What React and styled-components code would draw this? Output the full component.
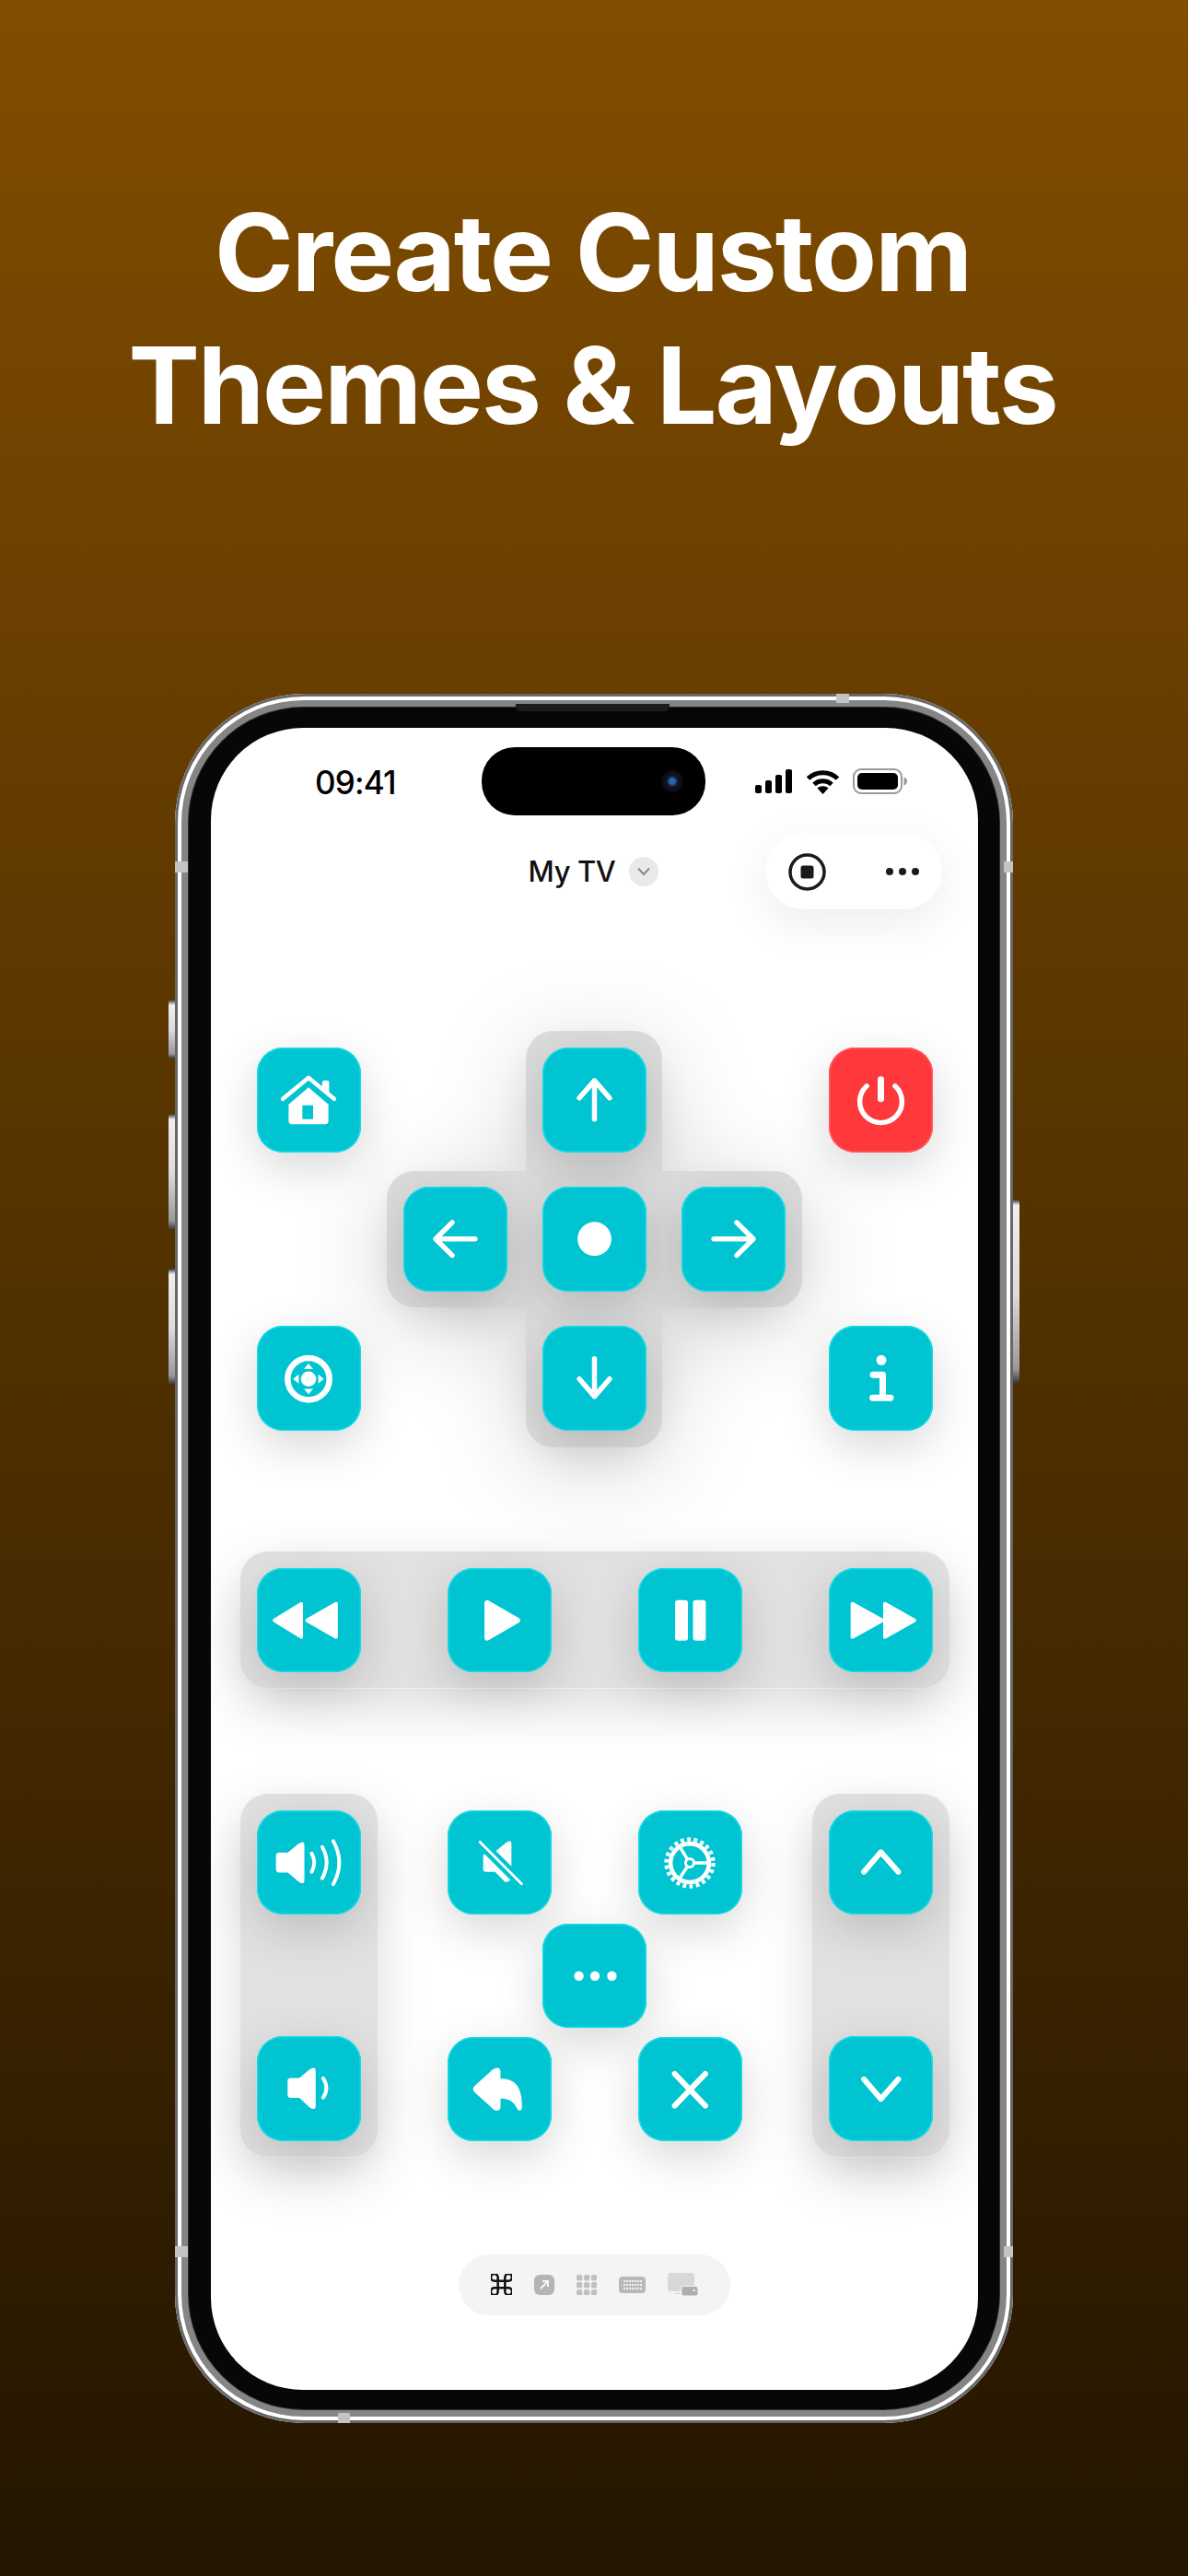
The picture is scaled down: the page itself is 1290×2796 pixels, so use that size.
import React from 'react';
import styled, { createGlobalStyle } from 'styled-components';

const GlobalStyle = createGlobalStyle`
html, body {
  margin: 0;
  padding: 0;
  background: #231500;
}
* { box-sizing: border-box; }
`;

const Page = styled.div`
width: 1290px;
height: 2796px;
overflow: hidden;
display: flex;
flex-direction: column;
align-items: center;
background: linear-gradient(180deg, #814d00 0%, #231500 100%);
font-family: Inter, "Liberation Sans", sans-serif;
`;

const Title = styled.h1`
margin: 202px 0 0;
padding-right: 3px;
font-size: 116px;
line-height: 144px;
font-weight: 700;
letter-spacing: -2px;
text-align: center;
color: #fff;
`;

const Phone = styled.div`
position: relative;
flex: none;
width: 910px;
height: 1877px;
margin-top: 263px;
padding: 37px 38px 36px 39px;
border-radius: 140px;
background: #070707;
box-shadow: inset 0 0 0 3px #686868, inset 0 0 0 7px #fff, inset 0 0 0 14px #858585, inset 0 0 0 15px #2a2a2a;
`;

const SideButton = styled.span`
position: absolute;
top: ${p => p.$top}px;
height: ${p => p.$height}px;
${p => (p.$right ? 'right: -7px;' : 'left: -7px;')}
width: 7px;
border-radius: ${p => (p.$right ? '0 3px 3px 0' : '3px 0 0 3px')};
background: linear-gradient(180deg, #333 0, #eee 6px, #ddd 50%, #999 92%, #333 100%);
`;

const Band = styled.span`
position: absolute;
background: #c4c4c4;
${p => p.$css}
`;

const Speaker = styled.span`
position: absolute;
top: 11px;
left: 370px;
width: 167px;
height: 8px;
border-radius: 0 0 5px 5px;
background: #1c1c1c;
`;

const Screen = styled.div`
width: 833px;
height: 1804px;
border-radius: 100px;
overflow: hidden;
background: #fff;
display: flex;
flex-direction: column;
`;

const StatusBar = styled.div`
display: grid;
grid-template-columns: 294px 243px 1fr;
height: 72px;
margin-top: 21px;
`;

const Time = styled.div`
padding: 2px 0 0 113px;
font-size: 35px;
font-weight: 500;
letter-spacing: -0.8px;
line-height: 72px;
color: #000;
`;

const Island = styled.div`
display: flex;
align-items: center;
justify-content: flex-end;
padding-right: 24px;
border-radius: 36px;
background: #000;
`;

const Camera = styled.span`
width: 24px;
height: 24px;
border-radius: 50%;
background: radial-gradient(circle, #2a63b0 0 3px, #14294f 5px, #101218 7px, #0b0b0d 12px);
`;

const StatusIcons = styled.div`
display: flex;
align-items: center;
justify-content: flex-end;
gap: 14px;
padding-right: 77px;
`;

const Nav = styled.div`
display: grid;
grid-template-columns: 1fr auto 1fr;
align-items: center;
height: 83px;
margin-top: 21px;
`;

const NavTitle = styled.div`
grid-column: 2;
display: flex;
align-items: center;
gap: 15px;
padding-right: 2px;
font-size: 31px;
font-weight: 500;
letter-spacing: -0.4px;
color: #111;
`;

const ChevronBadge = styled.span`
display: flex;
align-items: center;
justify-content: center;
width: 32px;
height: 32px;
border-radius: 50%;
background: #e9e9e9;
`;

const Capsule = styled.div`
justify-self: end;
display: flex;
align-items: center;
justify-content: space-between;
width: 192px;
height: 83px;
margin-right: 39px;
padding: 1px 24px 0 25px;
border-radius: 42px;
background: #fff;
box-shadow: 0 14px 50px rgba(0, 0, 0, 0.08);
`;

const Remote = styled.div`
display: flex;
flex-direction: column;
width: 770px;
margin: 132px 0 0 31.5px;
`;

const Keypad = styled.div`
display: flex;
justify-content: space-between;
padding: 0 18px;
`;

const CornerColumn = styled.div`
display: flex;
flex-direction: column;
justify-content: space-between;
padding: 18px 0;
`;

const Cross = styled.div`
position: relative;
display: grid;
grid-template-columns: repeat(3, 113px);
grid-template-rows: repeat(3, 113.5px);
gap: 37.5px 38px;
padding: 18px;
`;

const CrossPlate = styled.div`
position: absolute;
inset: 0;
filter: drop-shadow(0 20px 50px rgba(0, 0, 0, 0.16));

&::before, &::after {
  content: '';
  position: absolute;
  border-radius: 30px;
  background: #dbdbdb;
}
&::before { top: 0; bottom: 0; left: 151px; width: 148px; }
&::after { left: 0; right: 0; top: 152px; height: 148px; }
`;

const Plate = styled.div`
display: flex;
justify-content: space-between;
border-radius: 30px;
background: #e1e1e1;
box-shadow: 0 20px 60px rgba(0, 0, 0, 0.14), inset 0 -1px 0 rgba(255, 255, 255, 0.5);
`;

const TransportPlate = styled(Plate)`
height: 149px;
margin-top: 113px;
padding: 18px 18px 17px;
`;

const Lower = styled.div`
display: flex;
justify-content: space-between;
height: 395px;
margin-top: 114px;
`;

const RockerPlate = styled(Plate)`
flex-direction: column;
width: 149px;
padding: 18px;
`;

const Middle = styled.div`
display: flex;
flex-direction: column;
align-items: center;
gap: 9.5px;
width: 320px;
padding-top: 18px;
`;

const MiddleRow = styled.div`
display: flex;
justify-content: space-between;
width: 100%;
`;

const Key = styled.div`
position: relative;
z-index: 1;
flex: none;
display: flex;
width: 113px;
height: 113.5px;
border-radius: 28px;
grid-column: ${p => p.$col || 'auto'};
grid-row: ${p => p.$row || 'auto'};
background: ${p => (p.$red ? '#ff383c' : '#00c4d2')};
box-shadow: inset 0 0 0 1.5px ${p => (p.$red ? '#ff5a60' : '#12dde6')}, 0 16px 50px rgba(0, 0, 0, 0.16);
`;

const Glyph = styled.svg.attrs({ viewBox: '0 0 113 114' })`
width: 113px;
height: 113.5px;
fill: #fff;
stroke: none;
`;

const Dock = styled.div`
align-self: center;
display: flex;
align-items: center;
justify-content: center;
gap: 24px;
width: 295px;
height: 66px;
margin-top: 105px;
border-radius: 33px;
background: #f4f4f4;
`;

const line = { fill: 'none', stroke: '#fff', strokeWidth: 5.5, strokeLinecap: 'round', strokeLinejoin: 'round' };
const solid = { stroke: '#fff', strokeWidth: 4, strokeLinejoin: 'round' };

const HomeIcon = () => (
  <Glyph>
    <path {...line} strokeWidth={4.5} d="M28 56 L56 33 L84 56" />
    <path d="M71 38 Q71 36 73 36 H76.5 Q78.5 36 78.5 38 V50 L71 44Z" />
    <path fillRule="evenodd" d="M56 43.5 L77.7 62 V80 Q77.7 83.5 74 83.5 H38 Q34.3 83.5 34.3 80 V62Z M49.3 63 V78 H61 V63Z" />
  </Glyph>
);

const PowerIcon = () => (
  <Glyph>
    <path {...line} d="M41 42 A23 23 0 1 0 72 42" />
    <path {...line} strokeWidth={7} d="M56.5 35V56" />
  </Glyph>
);

const ArrowUp = () => <Glyph><path {...line} d="M56.5 37V78 M40 55 L56.5 36 L73 55" /></Glyph>;
const ArrowDown = () => <Glyph><path {...line} d="M56.5 77V36 M40 58 L56.5 77 L73 58" /></Glyph>;
const ArrowLeft = () => <Glyph><path {...line} d="M35 57H78 M53 39 L35 57 L53 75" /></Glyph>;
const ArrowRight = () => <Glyph><path {...line} d="M78 57H35 M60 39 L78 57 L60 75" /></Glyph>;
const OkIcon = () => <Glyph><circle cx="56.5" cy="57" r="18.5" /></Glyph>;

const JoystickIcon = () => (
  <Glyph>
    <circle {...line} strokeWidth={6.5} cx="56" cy="58" r="22.8" />
    <circle cx="56" cy="58" r="8.3" />
    <path d="M56 41.3 L61 47.3 H51Z M56 74.7 L61 68.7 H51Z M39.3 58 L45.3 53 V63Z M72.7 58 L66.7 53 V63Z" />
  </Glyph>
);

const InfoIcon = () => (
  <Glyph>
    <circle cx="57" cy="37.5" r="5.5" />
    <path {...line} strokeWidth={7} d="M48 53.5 H58.5 V78 M47.5 78.5 H67" />
  </Glyph>
);

const RewindIcon = () => (
  <Glyph>
    <path {...solid} d="M19 57 L48 39 V75Z M54.5 57 L86 39 V75Z" />
  </Glyph>
);

const PlayIcon = () => (
  <Glyph>
    <path stroke="#fff" strokeWidth={6} strokeLinejoin="round" d="M43 38 V76 L76 57Z" />
  </Glyph>
);

const PauseIcon = () => (
  <Glyph>
    <rect x="40" y="35" width="14" height="44" rx="3" />
    <rect x="59.5" y="35" width="14" height="44" rx="3" />
  </Glyph>
);

const ForwardIcon = () => (
  <Glyph>
    <path {...solid} d="M25.5 39 L58 57 L25.5 75Z M61 39 L93 57 L61 75Z" />
  </Glyph>
);

const VolumeUpIcon = () => (
  <Glyph>
    <path d="M24 46 H33.5 L45 36.5 Q51.5 32 51.5 38 V76 Q51.5 82 45 77.5 L33.5 67.7 H24 Q20.5 67.7 20.5 64 V50 Q20.5 46 24 46Z" />
    <path {...line} strokeWidth={4} d="M59.5 47 Q65 57 59.5 67 M71 40 Q80.5 57 71 74 M83 33.5 Q96 57 83 80.5" />
  </Glyph>
);

const VolumeDownIcon = () => (
  <Glyph>
    <path d="M36.5 45.7 H46 L57 36.5 Q63.8 32 63.8 38 V76 Q63.8 82 57 77.5 L46 67.3 H36.5 Q33.2 67.3 33.2 64 V49 Q33.2 45.7 36.5 45.7Z" />
    <path {...line} strokeWidth={4} d="M72 46 Q79 57 72 67" />
  </Glyph>
);

const MuteIcon = () => (
  <Glyph>
    <path {...line} strokeWidth={2.8} d="M35 34.5 L80.5 80" />
    <path d="M52.5 44.3 L64 35 Q69.4 31.5 69.4 36 V61Z" />
    <path d="M40 47.5 L68.5 76 L63 78.5 L51.5 67 H41 Q38.6 67 38.6 64.5 V49Z" />
  </Glyph>
);

const spokes = 'M56 57.3 H75 M56 57.3 L45.3 40 M56 57.3 L45.3 73.5';

const GearIcon = () => (
  <Glyph>
    <circle cx="56" cy="57.3" r="25.6" fill="none" stroke="#fff" strokeWidth={4.4} strokeDasharray="3.9 3.41" />
    <circle cx="56" cy="57.3" r="21" fill="none" stroke="#fff" strokeWidth={4.6} />
    <path {...line} strokeWidth={3.5} d={spokes} />
    <circle cx="56" cy="57.3" r="4.6" fill="#00c4d2" stroke="#fff" strokeWidth={3} />
  </Glyph>
);

const ChevronUp = () => <Glyph><path {...line} strokeWidth={6} d="M38 67 L56.5 45.5 L75.5 67" /></Glyph>;
const ChevronDown = () => <Glyph><path {...line} strokeWidth={6} d="M38 47 L56.5 68.5 L75.5 47" /></Glyph>;

const DotsIcon = () => (
  <Glyph>
    <circle cx="39.5" cy="57" r="5.2" />
    <circle cx="57" cy="57" r="5.2" />
    <circle cx="75.5" cy="57" r="5.2" />
  </Glyph>
);

const CloseIcon = () => <Glyph><path {...line} strokeWidth={6} d="M39.5 40 L73 75 M73 40 L39.5 75" /></Glyph>;

const BackIcon = () => (
  <Glyph>
    <path d="M29 53.5 L49 35.5 Q57 31 57.5 38 V45.5 C74 45 81 55 81 76 C81 81 77 81 75.5 78 C72 70 66 67 57.5 67 V76 C57.5 81 52 81 49.5 78.5 L29 60 Q26 57 29 53.5Z" />
  </Glyph>
);

const SignalIcon = () => (
  <svg width="41" height="26" viewBox="0 0 41 26" fill="#000">
    <rect x="0" y="17" width="7" height="9" rx="2" />
    <rect x="11" y="12" width="7" height="14" rx="2" />
    <rect x="22" y="6" width="7" height="20" rx="2" />
    <rect x="33" y="0" width="7" height="26" rx="2" />
  </svg>
);

const WifiIcon = () => (
  <svg width="37" height="27" viewBox="0 0 37 27" fill="none" stroke="#000" strokeWidth="5">
    <path d="M2.5 10 C11 1.5 26 1.5 34.5 10" />
    <path d="M9 16.5 C14 11.5 23 11.5 28 16.5" />
    <path d="M18.5 27 L12.5 20.5 C15.5 17.5 21.5 17.5 24.5 20.5Z" fill="#000" stroke="none" />
  </svg>
);

const BatteryIcon = () => (
  <svg width="59" height="28" viewBox="0 0 59 28">
    <rect x="1" y="1" width="52" height="26" rx="8" fill="#fff" stroke="#9a9a9a" strokeWidth="2" />
    <rect x="5" y="5" width="44" height="18" rx="5" fill="#000" />
    <path d="M55.5 9.5 C58 10.5 59 12 59 14 C59 16 58 17.5 55.5 18.5Z" fill="#9a9a9a" />
  </svg>
);

const StopIcon = () => (
  <svg width="41" height="41" viewBox="0 0 41 41">
    <circle cx="20.5" cy="20.5" r="18.5" fill="none" stroke="#1b1b1b" strokeWidth="3.5" />
    <rect x="13.5" y="13.5" width="14" height="14" rx="2.5" fill="#1b1b1b" />
  </svg>
);

const MoreIcon = () => (
  <svg width="38" height="10" viewBox="0 0 38 10" fill="#1b1b1b">
    <circle cx="5" cy="5" r="4" />
    <circle cx="19" cy="5" r="4" />
    <circle cx="33" cy="5" r="4" />
  </svg>
);

const CommandIcon = () => (
  <svg width="23" height="23" viewBox="3 3 18 18" fill="none" stroke="#111" strokeWidth="2">
    <path d="M15 6v12a3 3 0 1 0 3-3H6a3 3 0 1 0 3 3V6a3 3 0 1 0-3 3h12a3 3 0 1 0-3-3" />
  </svg>
);

const ShortcutIcon = () => (
  <svg width="22" height="22" viewBox="0 0 22 22">
    <rect width="22" height="22" rx="6" fill="#b4b4b4" />
    <path d="M7 15 L15 7 M9 7 H15 V13" fill="none" stroke="#f4f4f4" strokeWidth="2" />
  </svg>
);

const gridCells = [0, 8, 16].flatMap(y => [0, 8, 16].map(x => [x, y]));

const GridIcon = () => (
  <svg width="22" height="22" viewBox="0 0 22 22" fill="#c0c0c0">
    {gridCells.map(([x, y]) => <rect key={`${x}-${y}`} x={x} y={y} width="6.4" height="6.4" rx="2" />)}
  </svg>
);

const keyCells = [5, 9, 13].flatMap(y => [5, 8, 11, 14, 17, 20, 23].map(x => [x, y]));

const KeyboardIcon = () => (
  <svg width="29" height="18" viewBox="0 0 29 18">
    <rect width="29" height="18" rx="4" fill="#b9b9b9" />
    {keyCells.map(([x, y]) => <rect key={`${x}-${y}`} x={x} y={y - 1} width="2" height="2" fill="#f0f0f0" />)}
  </svg>
);

const DevicesIcon = () => (
  <svg width="33" height="25" viewBox="0 0 33 25">
    <rect width="29" height="20" rx="3" fill="#d8d8d8" />
    <rect x="8" y="21.5" width="6" height="1.5" fill="#d8d8d8" />
    <rect x="15" y="14.5" width="18" height="10.5" rx="2.5" fill="#aeaeae" stroke="#f4f4f4" strokeWidth="1" />
    <circle cx="28.5" cy="19" r="1.2" fill="#f4f4f4" />
  </svg>
);

const bands = [
  'top: 0; left: 718px; width: 14px; height: 10px;',
  'bottom: 0; left: 177px; width: 13px; height: 11px;',
  'top: 182px; left: 0; width: 14px; height: 12px;',
  'top: 182px; right: 0; width: 10px; height: 12px;',
  'top: 1685px; left: 0; width: 14px; height: 12px;',
  'top: 1685px; right: 0; width: 10px; height: 12px;',
];

function App() {
  return (
    <Page>
      <GlobalStyle />
      <Title>Create Custom<br />Themes &amp; Layouts</Title>
      <Phone>
        <SideButton $top={332} $height={64} />
        <SideButton $top={456} $height={126} />
        <SideButton $top={624} $height={126} />
        <SideButton $right $top={549} $height={200} />
        {bands.map(b => <Band key={b} $css={b} />)}
        <Speaker />
        <Screen>
          <StatusBar>
            <Time>09:41</Time>
            <Island><Camera /></Island>
            <StatusIcons>
              <SignalIcon />
              <WifiIcon />
              <BatteryIcon />
            </StatusIcons>
          </StatusBar>
          <Nav>
            <NavTitle>
              My TV
              <ChevronBadge>
                <svg width="16" height="10" viewBox="0 0 16 10" fill="none" stroke="#8a8a8a" strokeWidth="2">
                  <path d="M2 1.5 L8 8 L14 1.5" />
                </svg>
              </ChevronBadge>
            </NavTitle>
            <Capsule>
              <StopIcon />
              <MoreIcon />
            </Capsule>
          </Nav>
          <Remote>
            <Keypad>
              <CornerColumn>
                <Key><HomeIcon /></Key>
                <Key><JoystickIcon /></Key>
              </CornerColumn>
              <Cross>
                <CrossPlate />
                <Key $col={2} $row={1}><ArrowUp /></Key>
                <Key $col={1} $row={2}><ArrowLeft /></Key>
                <Key $col={2} $row={2}><OkIcon /></Key>
                <Key $col={3} $row={2}><ArrowRight /></Key>
                <Key $col={2} $row={3}><ArrowDown /></Key>
              </Cross>
              <CornerColumn>
                <Key $red><PowerIcon /></Key>
                <Key><InfoIcon /></Key>
              </CornerColumn>
            </Keypad>
            <TransportPlate>
              <Key><RewindIcon /></Key>
              <Key><PlayIcon /></Key>
              <Key><PauseIcon /></Key>
              <Key><ForwardIcon /></Key>
            </TransportPlate>
            <Lower>
              <RockerPlate>
                <Key><VolumeUpIcon /></Key>
                <Key><VolumeDownIcon /></Key>
              </RockerPlate>
              <Middle>
                <MiddleRow>
                  <Key><MuteIcon /></Key>
                  <Key><GearIcon /></Key>
                </MiddleRow>
                <Key><DotsIcon /></Key>
                <MiddleRow>
                  <Key><BackIcon /></Key>
                  <Key><CloseIcon /></Key>
                </MiddleRow>
              </Middle>
              <RockerPlate>
                <Key><ChevronUp /></Key>
                <Key><ChevronDown /></Key>
              </RockerPlate>
            </Lower>
            <Dock>
              <CommandIcon />
              <ShortcutIcon />
              <GridIcon />
              <KeyboardIcon />
              <DevicesIcon />
            </Dock>
          </Remote>
        </Screen>
      </Phone>
    </Page>
  );
}

export default App;
